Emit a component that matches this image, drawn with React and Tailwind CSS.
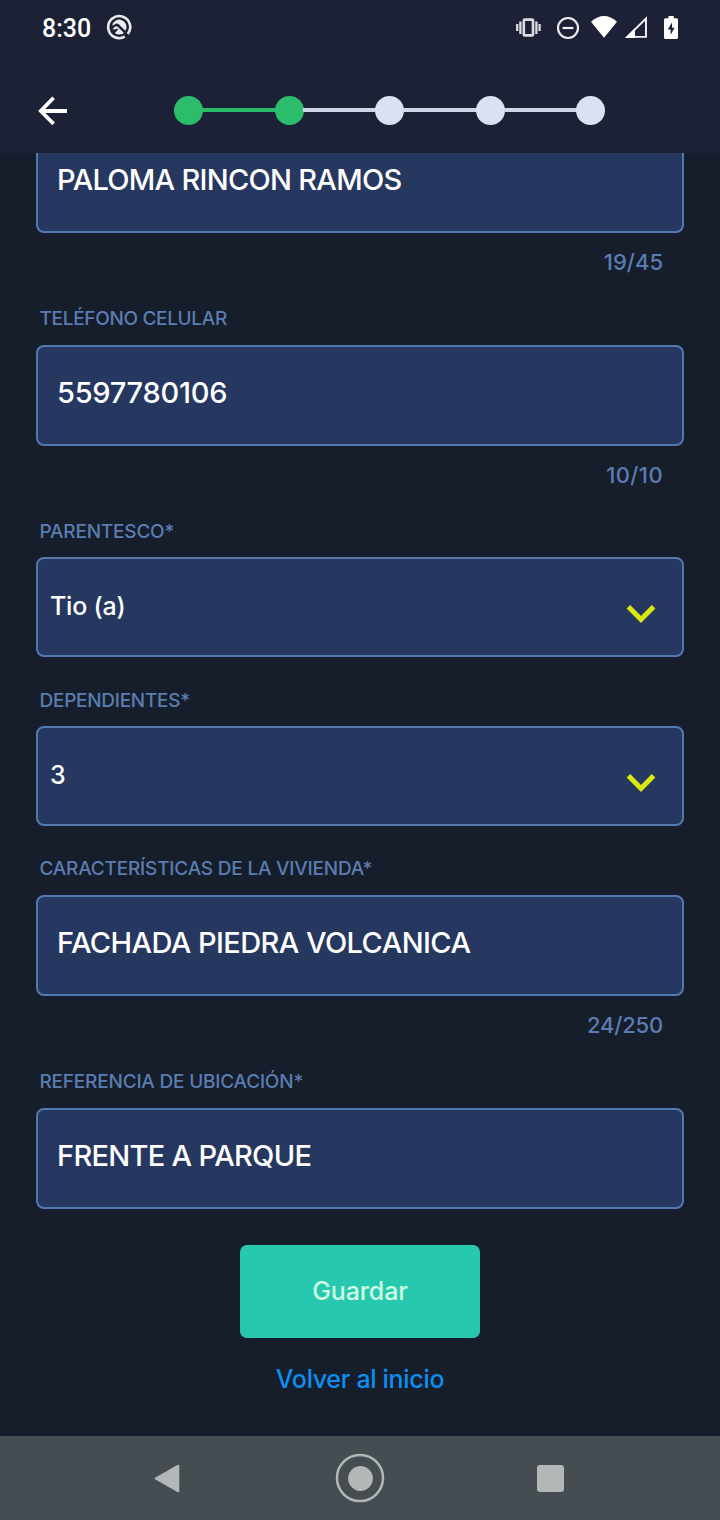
import React from "react";

function StatusBar() {
  return (
    <div className="flex h-[56px] items-center pl-[42px] text-white">
      <span className="font-[Roboto] text-[25px] font-medium leading-none">8:30</span>
      <svg className="ml-[14px] -mt-[2px]" width="28" height="28" viewBox="0 0 28 28" fill="none">
        <path d="M19.800 23.600A11 11 0 1 1 22.800 21" stroke="#ececf0" strokeWidth="2.600" />
        <path d="M7.200 12.600A7.200 7.200 0 1 1 20.300 17.800L13.500 10.900Q11.500 9.800 9.800 11.500z" fill="#ececf0" />
        <path d="M7.300 16.300L10.300 13.500Q11.700 12.600 13 13.900L19 20Q14 23.200 9.800 20L13.200 16.600" fill="#ececf0" />
        <path d="M8.800 19.200L12.600 15.800" stroke="#1c2135" strokeWidth="1.400" />
      </svg>
      <svg className="absolute left-[510px] top-[10px]" width="174" height="36" viewBox="510 10 174 36" fill="none">
        <rect x="523.800" y="19.600" width="9.200" height="15.800" rx="1" stroke="#dcdde3" strokeWidth="2.600" />
        <path d="M520.400 21.500v12.500M517.200 24v7M536.400 21.500v12.500M539.600 24v7" stroke="#dcdde3" strokeWidth="2.300" />
        <circle cx="568" cy="28" r="10" stroke="#f0f0f4" strokeWidth="2.100" />
        <path d="M562.600 28h10.800" stroke="#f0f0f4" strokeWidth="2.200" />
        <path d="M591 21.800q13-11.400 26 0L604 37.800z" fill="#fff" />
        <path d="M646 18.500v18.400h-18.600z" stroke="#f4f4f7" strokeWidth="1.900" />
        <path d="M625 38l10-9.800V38z" fill="#fff" />
        <path d="M668.500 16h5.200v2.200h2.800q1.500 0 1.500 1.500v17.800q0 1.500-1.500 1.500h-11q-1.500 0-1.500-1.500V19.700q0-1.500 1.500-1.500h3z" fill="#fff" />
        <path d="M672 22.500l-4.200 7h2.800v5.200l4-7h-2.600z" fill="#1c2135" />
      </svg>
    </div>
  );
}

const STEPS = [true, true, false, false, false];

function Stepper() {
  return (
    <div className="flex items-center">
      {STEPS.map((done, i) => (
        <React.Fragment key={i}>
          {i > 0 && (
            <div className={done ? "h-[4px] w-[73.500px] -mx-px bg-[#2bb96b]" : "h-[4px] w-[73.500px] -mx-px bg-[#d0d5e6]"} />
          )}
          <div className={done ? "size-[29px] rounded-full bg-[#2bbd6c]" : "size-[29px] rounded-full bg-[#dce1f1]"} />
        </React.Fragment>
      ))}
    </div>
  );
}

function Header() {
  return (
    <header className="h-[153px] shrink-0 bg-[#1c2135]">
      <StatusBar />
      <div className="flex h-[108px] items-center pl-[38px]">
        <svg width="30" height="30" viewBox="0 0 30 30" fill="none" stroke="#fff" strokeWidth="3.800">
          <path d="M29 16H3.500M15.600 2.800L2.800 16l12.800 12.800" />
        </svg>
        <div className="ml-[106px]">
          <Stepper />
        </div>
      </div>
    </header>
  );
}

function Label({ className, children }) {
  return (
    <div className={`flex items-center pl-[39.500px] text-[19px] font-medium leading-none text-[#5b7db1] whitespace-nowrap ${className}`}>
      {children}
    </div>
  );
}

function Counter({ className, children }) {
  return (
    <div className={`flex h-[58px] items-center justify-end text-[22px] font-medium leading-none text-[#5b7db1] ${className}`}>
      {children}
    </div>
  );
}

function TextBox({ className, children }) {
  return (
    <div className={`mx-[36px] flex h-[101px] rounded-[8px] border-2 border-[#5479ae] bg-[#263760] pl-[19px] pt-[31px] text-[29px] font-medium leading-[29px] text-white whitespace-nowrap ${className}`}>
      {children}
    </div>
  );
}

function SelectBox({ children }) {
  return (
    <div className="mx-[36px] flex h-[100px] justify-between rounded-[8px] border-2 border-[#5479ae] bg-[#263760] pl-[12px] pr-[26px] pt-[35px] text-[25px] font-medium leading-[25px] tracking-[-0.2px] text-white">
      {children}
      <svg className="mt-[10px]" width="30" height="20" viewBox="0 0 30 20" fill="none" stroke="#dbe810" strokeWidth="5">
        <path d="M2.400 2.800L15 15.400 27.600 2.800" />
      </svg>
    </div>
  );
}

function NavBar() {
  return (
    <nav className="flex h-[84px] shrink-0 items-center justify-between bg-[#454d52] pl-[153px] pr-[156px]">
      <svg width="28" height="32" viewBox="0 0 28 32" fill="#b3b7b8" stroke="#b3b7b8" strokeWidth="2" strokeLinejoin="round">
        <path d="M2.500 16.500L25.300 3.700v25.600z" />
      </svg>
      <svg className="ml-[2px]" width="50" height="50" viewBox="0 0 50 50">
        <circle cx="25" cy="25" r="23" fill="none" stroke="#b3b7b8" strokeWidth="2.500" />
        <circle cx="25.500" cy="25.500" r="12.400" fill="#b3b7b8" />
      </svg>
      <div className="mt-px size-[27px] rounded-[3px] bg-[#b3b7b8]" />
    </nav>
  );
}

export default function App() {
  return (
    <div className="relative flex h-[1520px] w-[720px] flex-col overflow-hidden bg-[#161d2b] font-[Inter,sans-serif]">
      <Header />
      <main className="flex flex-1 flex-col">
        <div className="mx-[36px] h-[80px] rounded-b-[8px] border-2 border-t-0 border-[#5479ae] bg-[#263760] pl-[19px] pt-[12px] text-[29px] font-medium leading-[29px] text-white whitespace-nowrap">
          <span className="tracking-[-0.72px]">PALOMA RINCON RAMOS</span>
        </div>
        <Counter className="pr-[57px] tracking-[0px]">19/45</Counter>
        <Label className="h-[54px] tracking-[-0.32px]">TELÉFONO CELULAR</Label>
        <TextBox className="tracking-[-0.27px]">5597780106</TextBox>
        <Counter className="pr-[57px] tracking-[0.4px]">10/10</Counter>
        <Label className="h-[54px] -mb-px tracking-[-0.2px]">PARENTESCO*</Label>
        <SelectBox><span>Tio (a)</span></SelectBox>
        <Label className="mt-[17px] h-[52px] tracking-[-0.27px]">DEPENDIENTES*</Label>
        <SelectBox><span>3</span></SelectBox>
        <Label className="mt-[15px] h-[54px] tracking-[-0.2px]">CARACTERÍSTICAS DE LA VIVIENDA*</Label>
        <TextBox className="tracking-[-0.57px]">FACHADA PIEDRA VOLCANICA</TextBox>
        <Counter className="pr-[57px] tracking-[-0.2px]">24/250</Counter>
        <Label className="h-[54px] tracking-[-0.2px]">REFERENCIA DE UBICACIÓN*</Label>
        <TextBox className="tracking-[-0.7px]">FRENTE A PARQUE</TextBox>
        <button className="mx-auto mt-[36px] h-[92.500px] w-[240px] rounded-[7px] bg-[#26c9af] text-[25px] font-medium leading-none tracking-[-0.1px] text-[#cffbe2]">Guardar</button>
        <a className="mx-auto mt-[29px] text-[25px] font-medium leading-[25px] tracking-[-0.32px] text-[#0c8ff0]">Volver al inicio</a>
      </main>
      <NavBar />
    </div>
  );
}
